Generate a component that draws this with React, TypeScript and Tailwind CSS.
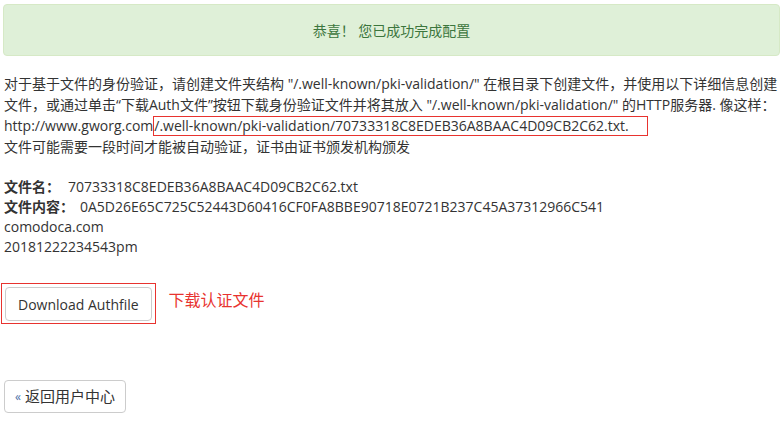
import React from "react";

const fileName = "70733318C8EDEB36A8BAAC4D09CB2C62.txt";
const fileContent = "0A5D26E65C725C52443D60416CF0FA8BBE90718E0721B237C45A37312966C541";

export default function App() {
    return (
        <div className="w-[784px] h-[430px] bg-white text-[#333] text-[14px] leading-[21px] font-['Open_Sans','Noto_Sans_CJK_SC',sans-serif] px-[4px] pt-[4px] overflow-hidden">
            <div className="-ml-px h-[52px] rounded-[4px] border border-[#d6e9c6] bg-[#dff0d8] text-[#3c763d] flex items-center justify-center">
                恭喜！ 您已成功完成配置
            </div>

            <p className="mt-[17px]">
                对于基于文件的身份验证，请创建文件夹结构 "/.well-known/pki-validation/" 在根目录下创建文件，并使用以下详细信息创建文件，或通过单击“下载Auth文件”按钮下载身份验证文件并将其放入 "/.well-known/pki-validation/" 的HTTP服务器. 像这样：
                <br />
                http://www.gworg.com<span className="inline-block border border-[#e8332f] leading-[18px] pr-[18px] -mb-px">/.well-known/pki-validation/{fileName}.</span>
                <br />
                文件可能需要一段时间才能被自动验证，证书由证书颁发机构颁发
            </p>

            <div className="mt-[20px] leading-[20px]">
                <div>
                    <b className="font-bold">文件名：</b>
                    <span className="ml-[8px]">{fileName}</span>
                </div>
                <div>
                    <b className="font-bold">文件内容：</b>
                    <span className="ml-[6px]">{fileContent}</span>
                </div>
                <div>comodoca.com</div>
                <div>20181222234543pm</div>
            </div>

            <div className="mt-[26px] flex items-center">
                <div className="-ml-[3px] border border-[#e8332f] pt-[3px] px-[3px] pb-[2px]">
                    <button className="h-[34px] px-[12px] rounded-[4px] border border-[#ccc] bg-white text-[#333] text-[14px] block">
                        Download Authfile
                    </button>
                </div>
                <span className="ml-[13px] text-[#e8332f] text-[16px] -mt-[6px]">下载认证文件</span>
            </div>

            <button className="mt-[56px] h-[33px] px-[10px] rounded-[4px] border border-[#ccc] bg-white text-[#333] text-[14px] flex items-center gap-[4px]">
                <span className="text-[#4a6fa5] text-[12px]">«</span>
                <span className="text-[15px]">返回用户中心</span>
            </button>
        </div>
    );
}
